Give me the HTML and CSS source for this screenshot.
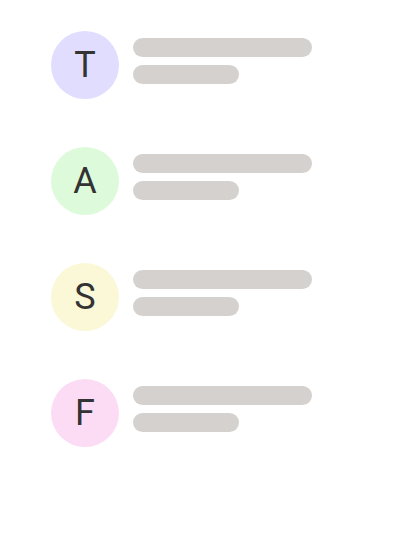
FILE: index.html
```
<!DOCTYPE html>
<html>
<head>
<meta charset="utf-8">
<link rel="stylesheet" href="styles.css">
</head>
<body>
<ul class="list">
  <li class="item">
    <div class="avatar avatar-t">T</div>
    <div class="lines"><div class="line line-long"></div><div class="line line-short"></div></div>
  </li>
  <li class="item">
    <div class="avatar avatar-a">A</div>
    <div class="lines"><div class="line line-long"></div><div class="line line-short"></div></div>
  </li>
  <li class="item">
    <div class="avatar avatar-s">S</div>
    <div class="lines"><div class="line line-long"></div><div class="line line-short"></div></div>
  </li>
  <li class="item">
    <div class="avatar avatar-f">F</div>
    <div class="lines"><div class="line line-long"></div><div class="line line-short"></div></div>
  </li>
</ul>
</body>
</html>
```

FILE: styles.css
```
html, body {
  margin: 0;
  padding: 0;
  background: #ffffff;
  font-family: Roboto, "Noto Sans", sans-serif;
}
.list {
  list-style: none;
  margin: 0;
  padding: 31px 0 0 51px;
  display: flex;
  flex-direction: column;
  gap: 48px;
}
.item {
  display: flex;
  align-items: flex-start;
  gap: 14px;
}
.avatar {
  width: 68px;
  height: 68px;
  border-radius: 50%;
  display: flex;
  align-items: center;
  justify-content: center;
  font-size: 36px;
  color: #333333;
  line-height: 1;
}
.avatar-t { background: #e0ddff; }
.avatar-a { background: #ddfbdb; }
.avatar-s { background: #fbf8d7; }
.avatar-f { background: #fcdcf5; }
.lines {
  display: flex;
  flex-direction: column;
  gap: 8px;
  padding-top: 7px;
}
.line {
  height: 19px;
  border-radius: 10px;
  background: #d4d1ce;
}
.line-long { width: 179px; }
.line-short { width: 106px; }
```
